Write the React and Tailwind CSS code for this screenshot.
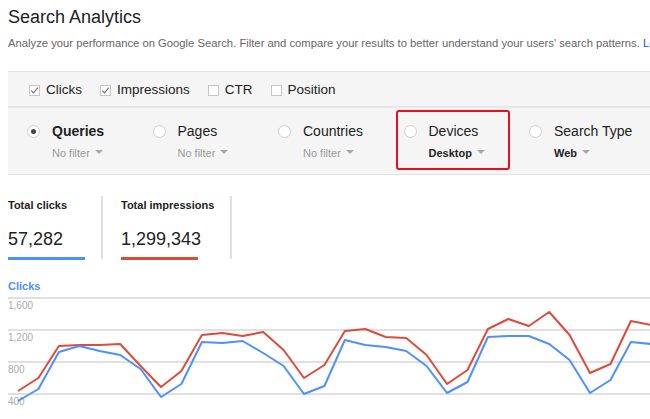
import React from "react";

const red = [392, 379, 347, 346, 346, 345, 367, 388, 372, 336, 334, 337, 333, 351, 379, 366, 332, 330, 338, 339, 356, 385, 371, 330, 320, 327, 313, 336, 374, 365, 322, 326];
const blue = [402, 390, 353, 347, 352, 356, 370, 398, 385, 343, 344, 342, 354, 367, 395, 387, 341, 346, 348, 352, 367, 394, 383, 338, 337, 337, 345, 361, 394, 381, 343, 345];

const toPoints = (ys) =>
  ys.map((y, i) => `${(10 + i * 20.43).toFixed(1)},${y - 294}`).join(" ");

const Checkbox = ({ checked, label }) => (
  <div className="flex items-center gap-[6px]">
    <span className="w-[11px] h-[11px] border border-[#c6c6c6] bg-white flex items-center justify-center">
      {checked && (
        <svg width="9" height="9" viewBox="0 0 9 9">
          <path d="M1.2 4.6 L3.5 6.8 L7.8 1.6" fill="none" stroke="#777" strokeWidth="1.2" />
        </svg>
      )}
    </span>
    <span className="text-[13.5px] text-[#222]">{label}</span>
  </div>
);

const Arrow = () => (
  <span className="inline-block w-0 h-0 border-x-[4px] border-t-[4px] border-x-transparent border-t-[#aaa] ml-[5px] mb-[2px]" />
);

const Dimension = ({ label, sub, selected, strongSub, boxed }) => (
  <div className="relative w-[125.5px] shrink-0 pt-[14px]">
    {boxed && (
      <div className="absolute left-[-8px] top-[2px] w-[114px] h-[60px] border-2 border-[#e8101a] rounded-[3px]" />
    )}
    <div className="flex items-center gap-[12px] h-[18px]">
      <span className="w-[13px] h-[13px] rounded-full border border-[#cfcfcf] bg-white flex items-center justify-center">
        {selected && <span className="w-[5px] h-[5px] rounded-full bg-[#444]" />}
      </span>
      <span className={`text-[14px] text-[#222] ${selected ? "font-bold" : ""}`}>{label}</span>
    </div>
    <div
      className={`pl-[25px] mt-[6px] text-[11px] leading-[14px] flex items-center ${
        strongSub ? "font-bold text-[#222]" : "text-[#999]"
      }`}
    >
      {sub}
      <Arrow />
    </div>
  </div>
);

const App = () => {
  return (
    <div className="w-[650px] h-[419px] overflow-hidden bg-white font-['Liberation_Sans',Arial,sans-serif]">
      <h1 className="pl-2 pt-[5px] text-[18px] leading-[24px] text-[#222]">Search Analytics</h1>
      <p className="pl-2 mt-[6px] text-[11.25px] leading-4 text-[#666] whitespace-nowrap overflow-hidden">
        Analyze your performance on Google Search. Filter and compare your results to better understand your users' search patterns.{" "}
        <span className="text-[#15c]">Learn more</span>
      </p>

      <div className="ml-2 mt-[20px] bg-[#f5f5f5] border-y border-[#e3e3e3]">
        <div className="h-[36px] flex items-center pt-[3px] pl-[21px] gap-[18px] border-b-2 border-[#e6e6e6]">
          <Checkbox checked label="Clicks" />
          <Checkbox checked label="Impressions" />
          <Checkbox label="CTR" />
          <Checkbox label="Position" />
        </div>
        <div className="h-[66px] flex pl-[19px]">
          <Dimension label="Queries" sub="No filter" selected />
          <Dimension label="Pages" sub="No filter" />
          <Dimension label="Countries" sub="No filter" />
          <Dimension label="Devices" sub="Desktop" strongSub boxed />
          <Dimension label="Search Type" sub="Web" strongSub />
        </div>
      </div>

      <div className="flex pl-2 mt-[21px]">
        <div className="w-[95px] h-[63px] border-r-2 border-[#e0e0e0]">
          <div className="pt-[2px] text-[11px] leading-[14px] font-bold text-[#222]">Total clicks</div>
          <div className="mt-[16px] text-[18px] leading-[22px] text-[#222]">57,282</div>
          <div className="mt-[7px] w-[77px] h-[3px] bg-[#4d90fe]" />
        </div>
        <div className="w-[129px] h-[63px] pl-[18px] border-r-2 border-[#e0e0e0]">
          <div className="pt-[2px] text-[11px] leading-[14px] font-bold text-[#222]">Total impressions</div>
          <div className="mt-[16px] text-[18px] leading-[22px] text-[#222]">1,299,343</div>
          <div className="mt-[7px] w-[77px] h-[3px] bg-[#dd4b39]" />
        </div>
      </div>

      <div className="pl-2 mt-[19px]">
        <div className="pt-[1px] text-[11px] leading-[14px] font-bold text-[#4d90fe]">Clicks</div>
        <svg width="642" height="125" className="block">
          {[5, 37, 69, 101].map((y) => (
            <line key={y} x1="0" x2="642" y1={y} y2={y} stroke="#e0e0e0" strokeWidth="2" />
          ))}
          {[
            ["1,600", 16],
            ["1,200", 48],
            ["800", 80],
            ["400", 112],
          ].map(([t, y]) => (
            <text key={t} x="0" y={y} fontSize="10" fill="#aaa" fontFamily="Liberation Sans, Arial, sans-serif">
              {t}
            </text>
          ))}
          <polyline points={toPoints(red)} fill="none" stroke="#dd4b39" strokeWidth="2" strokeLinejoin="round" />
          <polyline points={toPoints(blue)} fill="none" stroke="#4d90fe" strokeWidth="2" strokeLinejoin="round" />
        </svg>
      </div>
    </div>
  );
};

export default App;
